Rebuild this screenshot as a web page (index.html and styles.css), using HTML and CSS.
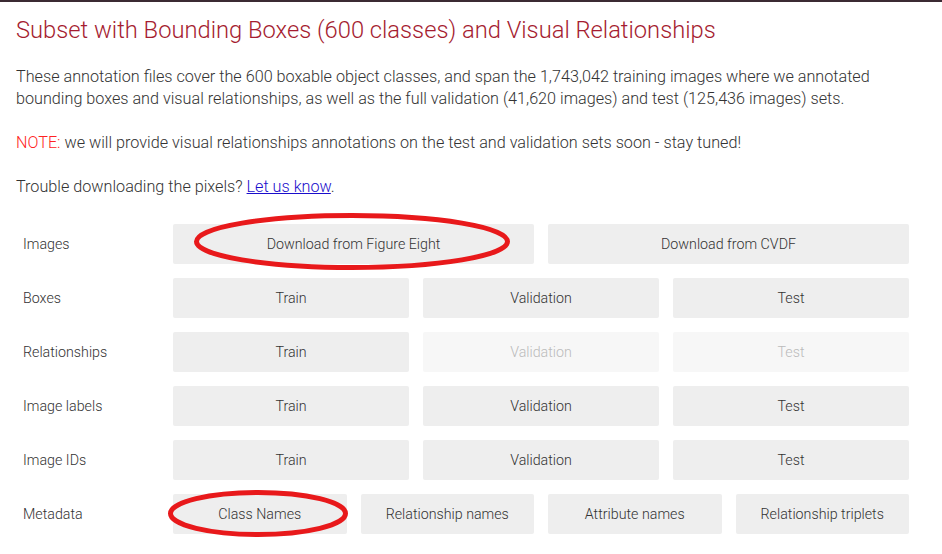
FILE: index.html
```html
<!DOCTYPE html>
<html>
<head>
<meta charset="utf-8">
<link rel="stylesheet" href="styles.css">
</head>
<body>
<div class="topband"></div>
<main class="content">
  <h2 class="title">Subset with Bounding Boxes (600 classes) and Visual Relationships</h2>
  <p>These annotation files cover the 600 boxable object classes, and span the 1,743,042 training images where we annotated bounding boxes and visual relationships, as well as the full validation (41,620 images) and test (125,436 images) sets.</p>
  <p><span class="note">NOTE:</span> we will provide visual relationships annotations on the test and validation sets soon - stay tuned!</p>
  <p>Trouble downloading the pixels? <a href="#">Let us know</a>.</p>
  <div class="table">
    <div class="row">
      <div class="label">Images</div>
      <div class="btns"><span class="btn">Download from Figure Eight</span><span class="btn">Download from CVDF</span></div>
    </div>
    <div class="row">
      <div class="label">Boxes</div>
      <div class="btns"><span class="btn">Train</span><span class="btn">Validation</span><span class="btn">Test</span></div>
    </div>
    <div class="row">
      <div class="label">Relationships</div>
      <div class="btns"><span class="btn">Train</span><span class="btn disabled">Validation</span><span class="btn disabled">Test</span></div>
    </div>
    <div class="row">
      <div class="label">Image labels</div>
      <div class="btns"><span class="btn">Train</span><span class="btn">Validation</span><span class="btn">Test</span></div>
    </div>
    <div class="row">
      <div class="label">Image IDs</div>
      <div class="btns"><span class="btn">Train</span><span class="btn">Validation</span><span class="btn">Test</span></div>
    </div>
    <div class="row">
      <div class="label">Metadata</div>
      <div class="btns"><span class="btn">Class Names</span><span class="btn">Relationship names</span><span class="btn">Attribute names</span><span class="btn">Relationship triplets</span></div>
    </div>
  </div>
</main>
<svg class="marks" width="942" height="554" viewBox="0 0 942 554">
  <ellipse cx="352" cy="241.5" rx="155.5" ry="26" fill="none" stroke="#e8191b" stroke-width="5"/>
  <ellipse cx="258" cy="513.5" rx="87.5" ry="21" fill="none" stroke="#e8191b" stroke-width="5"/>
</svg>
</body>
</html>
```
FILE: styles.css
```css
html, body {
  margin: 0;
  padding: 0;
  background: #fff;
}
body {
  position: relative;
  width: 942px;
  height: 554px;
  overflow: hidden;
  font-family: Roboto, "Liberation Sans", sans-serif;
  font-weight: 300;
  color: #333;
}
.topband {
  height: 2px;
  background: #3b2a33;
}
.content {
  padding: 0 33px 0 16px;
}
.title {
  margin: 12px 0 0;
  font-size: 23.73px;
  line-height: 32px;
  font-weight: 300;
  color: #a51c30;
}
p {
  margin: 20px 0 0;
  font-size: 16.2px;
  line-height: 22px;
}
p + p {
  margin-top: 22px;
}
.note {
  color: #f22;
}
a {
  color: #1a0dcc;
  text-decoration: underline;
}
.table {
  margin-top: 26px;
  display: flex;
  flex-direction: column;
  gap: 14px;
}
.row {
  display: flex;
  align-items: center;
  height: 40px;
}
.label {
  width: 150px;
  padding-left: 7px;
  font-size: 14.25px;
  font-weight: 300;
  color: #333;
}
.btns {
  flex: 1;
  display: flex;
  gap: 14px;
  height: 40px;
}
.btn {
  flex: 1;
  display: flex;
  align-items: center;
  justify-content: center;
  background: #eee;
  border-radius: 2px;
  font-size: 14.25px;
  font-weight: 300;
  color: #333;
}
.btn.disabled {
  background: #f7f7f7;
  color: #bbb;
}
.marks {
  position: absolute;
  left: 0;
  top: 0;
  pointer-events: none;
}
```
